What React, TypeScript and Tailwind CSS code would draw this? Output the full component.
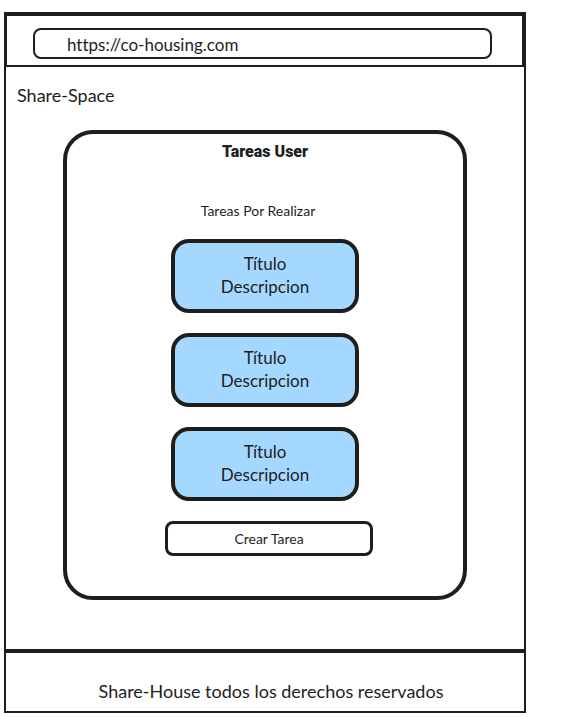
const tasks = [
  { id: 1, title: 'Título', description: 'Descripcion' },
  { id: 2, title: 'Título', description: 'Descripcion' },
  { id: 3, title: 'Título', description: 'Descripcion' },
];

function AddressBar() {
  return (
    <header className="border-t-2 border-r-2 border-b-2 border-l border-[#1e1e1e] pt-3 pr-[30px] pb-[6px] pl-[26px]">
      <input
        type="text"
        aria-label="Dirección"
        defaultValue="https://co-housing.com"
        className="block h-[31px] w-full rounded-lg border-2 border-[#1e1e1e] bg-white pt-0.5 pl-8 text-[17px] leading-6 outline-none"
      />
    </header>
  );
}

function TaskCard({ title, description }: { title: string; description: string }) {
  return (
    <li className="w-[188px] rounded-[18px] border-4 border-[#1e1e1e] bg-[#a5d8ff] pt-[9px] pb-[11px] text-center text-[17px] leading-[23px]">
      <h3>{title}</h3>
      <p>{description}</p>
    </li>
  );
}

export default function App() {
  return (
    <div className="min-h-screen bg-white pt-3 pr-[35px] pb-1 pl-1 font-['Lato',sans-serif] text-[#1e1e1e] [font-variant-ligatures:none]">
      <div className="border-2 border-[#1e1e1e]">
        <AddressBar />
        <main className="pb-[49px]">
          <h1 className="pt-4 pl-[11px] text-lg leading-6">Share-Space</h1>
          <section className="mx-[57px] mt-[23px] flex flex-col items-center rounded-[30px] border-4 border-[#1e1e1e] pt-[6px] pb-10">
            <h2 className="font-['Roboto',sans-serif] text-base leading-6 font-black">Tareas User</h2>
            <p className="mt-9 pr-[14px] text-sm leading-[22px]">Tareas Por Realizar</p>
            <ul className="mt-[17px] flex flex-col gap-5">
              {tasks.map((task) => (
                <TaskCard key={task.id} title={task.title} description={task.description} />
              ))}
            </ul>
            <button
              type="button"
              className="mt-5 ml-2 w-[208px] rounded-lg border-3 border-[#1e1e1e] bg-white py-1 text-sm leading-[21px]"
            >
              Crear Tarea
            </button>
          </section>
        </main>
        <footer className="border-t-4 border-[#1e1e1e] pt-[26px] pb-2 pl-3 text-center text-lg leading-6">
          Share-House todos los derechos reservados
        </footer>
      </div>
    </div>
  );
}
